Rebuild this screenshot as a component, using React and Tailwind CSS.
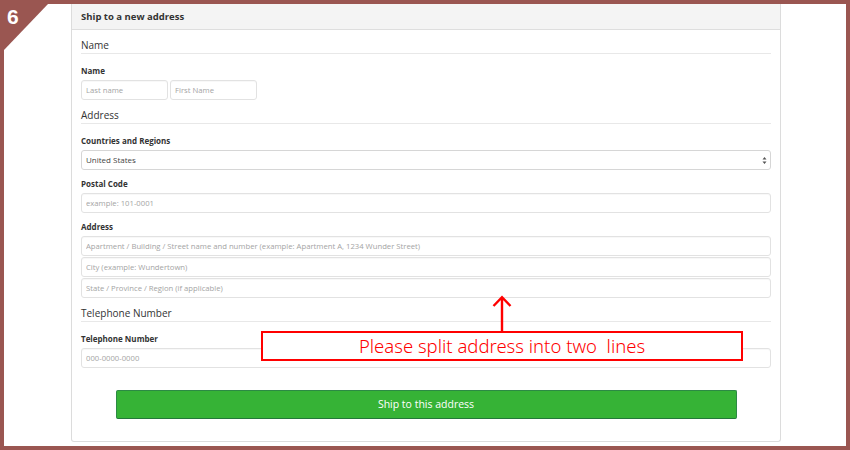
import React from 'react';

const font = { fontFamily: '"Open Sans", "Noto Sans", sans-serif' };

const SectionTitle = ({ children, className = '' }) => (
  <div className={`h-[17px] border-b border-[#e8e8e8] text-[10px] leading-[16px] text-[#333] ${className}`}>
    {children}
  </div>
);

const FieldLabel = ({ children, className = '' }) => (
  <div className={`mb-[3px] text-[8px] font-bold leading-[12px] text-[#333] ${className}`}>{children}</div>
);

const TextBox = ({ placeholder, className = '' }) => (
  <input
    type="text"
    placeholder={placeholder}
    className={`block h-[20px] rounded-[3px] border border-[#e2e2e2] bg-white px-[4px] text-[7.7px] text-[#555] shadow-[inset_0_1px_1px_rgba(0,0,0,0.03)] outline-none placeholder:text-[#a4a4a4] ${className}`}
    style={font}
  />
);

const App = () => {
  return (
    <div className="relative h-[450px] w-[850px] overflow-hidden bg-[#9a5651] p-[4px]" style={font}>
      <div className="relative h-full w-full overflow-hidden bg-white">
        {/* form panel */}
        <div className="ml-[67px] w-[710px] rounded-b-[3px] border border-t-0 border-[#dcdcdc]">
          <div className="flex h-[26px] items-center border-b border-[#dedede] bg-[#f4f4f4] px-[9px] pt-[1px] text-[9.5px] font-bold text-[#333]">
            Ship to a new address
          </div>
          <div className="px-[9px] pb-[22px]">
            <SectionTitle className="mt-[7px]">Name</SectionTitle>
            <FieldLabel className="mt-[11px]">Name</FieldLabel>
            <div className="flex gap-[2px]">
              <TextBox placeholder="Last name" className="w-[87px]" />
              <TextBox placeholder="First Name" className="w-[87px]" />
            </div>

            <SectionTitle className="mt-[7px]">Address</SectionTitle>
            <FieldLabel className="mt-[11px]">Countries and Regions</FieldLabel>
            <div className="relative flex h-[20px] items-center rounded-[3px] border border-[#d6d6d6] bg-white px-[4px] text-[8px] text-[#444]">
              United States
              <svg className="absolute right-[3px] top-[5px]" width="5" height="9" viewBox="0 0 5 9">
                <path d="M2.5 1 L4.5 3.5 H0.5 Z M2.5 8 L4.5 5.5 H0.5 Z" fill="#555" />
              </svg>
            </div>

            <FieldLabel className="mt-[8px]">Postal Code</FieldLabel>
            <TextBox placeholder="example: 101-0001" className="w-full" />

            <FieldLabel className="mt-[8px]">Address</FieldLabel>
            <div className="flex flex-col gap-[1px]">
              <TextBox
                placeholder="Apartment / Building / Street name and number (example: Apartment A, 1234 Wunder Street)"
                className="w-full"
              />
              <TextBox placeholder="City (example: Wundertown)" className="w-full" />
              <TextBox placeholder="State / Province / Region (if applicable)" className="w-full" />
            </div>

            <SectionTitle className="mt-[7px]">Telephone Number</SectionTitle>
            <FieldLabel className="mt-[11px]">Telephone Number</FieldLabel>
            <TextBox placeholder="000-0000-0000" className="w-full" />

            <button
              type="button"
              className="mx-auto mt-[22px] flex h-[29px] w-[621px] items-center justify-center rounded-[2px] border border-[#2c8a44] border-b-[#23783a] bg-[#36b336] text-[10.5px] text-white"
              style={font}
            >
              Ship to this address
            </button>
          </div>
        </div>

        {/* step badge */}
        <div className="absolute left-0 top-0 h-[50px] w-[48px]">
          <svg width="48" height="50" viewBox="0 0 48 50" className="absolute left-0 top-0">
            <polygon points="0,0 44,0 0,46" fill="#9a5651" />
          </svg>
          <span className="absolute left-[3px] top-[-3px] text-[21px] font-bold text-white" style={{ fontFamily: '"Liberation Sans", Arial, sans-serif' }}>
            6
          </span>
        </div>

        {/* review note */}
        <svg className="absolute left-[488px] top-[291px]" width="20" height="38" viewBox="0 0 20 38">
          <path d="M10 38 V2 M1.5 11 L10 2.2 L18.5 11" stroke="#ff0000" strokeWidth="2.4" fill="none" />
        </svg>
        <div
          className="absolute left-[257px] top-[327px] flex h-[30px] w-[482px] items-center justify-center border-2 border-[#ff0000] bg-white text-[18.5px] font-light text-[#ff0000]"
          style={{ fontFamily: '"Noto Sans", "Noto Sans CJK JP", sans-serif' }}
        >
          Please split address into two&nbsp; lines
        </div>
      </div>
    </div>
  );
};

export default App;
